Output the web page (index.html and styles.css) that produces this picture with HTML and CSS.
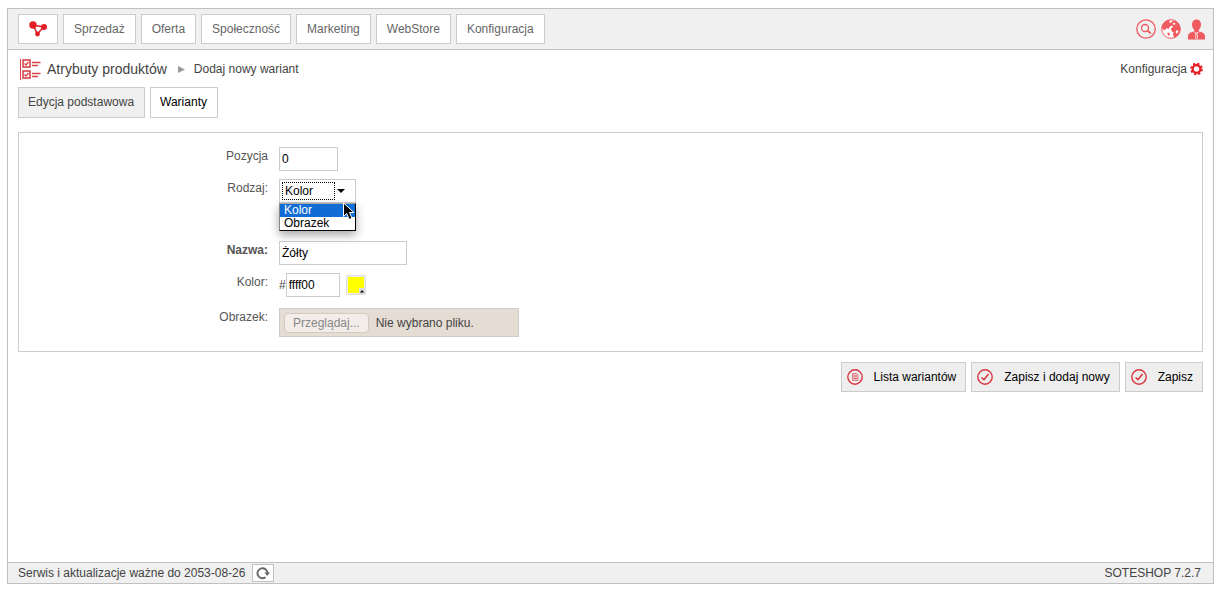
FILE: index.html
```
<!DOCTYPE html>
<html lang="pl">
<head>
  <meta charset="UTF-8" />
  <meta name="viewport" content="width=device-width, initial-scale=1.0"/>
  <title>Atrybuty produktów - Dodaj nowy wariant</title>
  <link rel="stylesheet" href="styles.css">
</head>
<body>
  <div class="frame">

    <!-- Menu główne -->
    <header class="topbar">
      <nav class="menu">
        <a class="menu-item menu-home" href="#" aria-label="Strona główna">
          <svg width="18" height="16" viewBox="0 0 18 16">
            <path d="M4 4L14.500 6L8.500 13Z" fill="none" stroke="#e31e24" stroke-width="1.500"/>
            <circle cx="4" cy="4" r="3.700" fill="#e31e24"/>
            <circle cx="15" cy="6" r="3" fill="#e31e24"/>
            <circle cx="8.500" cy="13" r="2.400" fill="#e31e24"/>
          </svg>
        </a>
        <a class="menu-item" href="#">Sprzedaż</a>
        <a class="menu-item" href="#">Oferta</a>
        <a class="menu-item" href="#">Społeczność</a>
        <a class="menu-item" href="#">Marketing</a>
        <a class="menu-item" href="#">WebStore</a>
        <a class="menu-item" href="#">Konfiguracja</a>
      </nav>
      <div class="tools">
        <a href="#" aria-label="Szukaj">
          <svg width="20" height="20" viewBox="0 0 20 20" fill="none" stroke="#ee5a5f">
            <circle cx="10" cy="10" r="9.200" stroke-width="1.300"/>
            <circle cx="9" cy="9" r="3.500" stroke-width="1.300"/>
            <path d="M11.500 11.500L14.800 14.600" stroke-width="1.800"/>
          </svg>
        </a>
        <a href="#" aria-label="Język">
          <svg width="20" height="20" viewBox="0 0 20 20">
            <circle cx="10" cy="10" r="9.300" fill="#fff" stroke="#ee5a5f"/>
            <path d="M0.700 9C1 4 5 0.700 9.500 0.700L8 3L9.500 4L11 2.500L14 1.500C17 3 19.300 6 19.300 10C19.300 14 17 17.500 13.500 18.700L12 16L12.500 13.500L10.500 12L10 9.500L12 8L11 6.500L9 7.500L7.500 10L5 9L4 11.500L2.500 10.500Z" fill="#ee5a5f"/>
            <path d="M11.500 4.500L13.500 3.500L14.500 5L13 6ZM14.500 13L16 11L17.500 12L16 15Z" fill="#fff"/>
            <path d="M6 14L8 13.500L9 15.500L7.500 17Z" fill="#ee5a5f"/>
          </svg>
        </a>
        <a href="#" aria-label="Konto">
          <svg width="20" height="21" viewBox="0 0 20 21">
            <path d="M10.500 0.500C13.500 0.500 15 2.500 15 5.500C15 8 14 9.500 12.800 10.700L12.800 12.500C16.500 13.500 19 14 19 17.500V20.500H2V17.500C2 14 4.500 13.500 8.200 12.500V10.700C7 9.500 6 8 6 5.500C6 2.500 7.500 0.500 10.500 0.500Z" fill="#ee5a5f"/>
            <path d="M8.200 13L10.500 14.200L12.800 13M10 14.200L9.500 18.500L10.500 20L11.500 18.500L11 14.200" fill="none" stroke="#fff" stroke-width="0.800"/>
          </svg>
        </a>
      </div>
    </header>

    <main class="content">
      <!-- Ścieżka -->
      <div class="heading">
        <svg class="heading-icon" width="22" height="22" viewBox="0 0 22 22" fill="none" stroke="#d8434a">
          <path d="M1.500 1V22" />
          <rect x="4" y="2" width="7" height="7" stroke-width="1.600"/>
          <rect x="4" y="13" width="7" height="7" stroke-width="1.600"/>
          <path d="M5.500 5.500L7 7L9.500 4M5.500 16.500L7 18L9.500 15" stroke-width="1.300"/>
          <path d="M13 4.500H21.500M13 7.500H19M13 15.500H21.500M13 18.500H19" stroke-width="1.300"/>
        </svg>
        <h1>Atrybuty produktów</h1>
        <svg class="arrow" width="7" height="7" viewBox="0 0 7 7"><path d="M0 0L7 3.500L0 7Z" fill="#999"/></svg>
        <span>Dodaj nowy wariant</span>
        <a class="config" href="#">Konfiguracja
          <svg width="13" height="14" viewBox="0 0 13 14" fill="none" stroke="#e31e24">
            <circle cx="6.500" cy="7" r="3.800" stroke-width="2.200"/>
            <circle cx="6.500" cy="7" r="5.300" stroke-width="2" stroke-dasharray="2.300 1.863"/>
          </svg>
        </a>
      </div>

      <nav class="tabs">
        <a class="tab" href="#">Edycja podstawowa</a>
        <a class="tab tab-active" href="#">Warianty</a>
      </nav>

      <form id="variant" class="panel">
        <div class="row">
          <label class="name" for="position">Pozycja</label>
          <input class="text text-small" id="position" type="text" value="0">
        </div>
        <div class="row row-type">
          <label class="name" for="type">Rodzaj:</label>
          <div class="select">
            <select id="type">
              <option selected>Kolor</option>
              <option>Obrazek</option>
            </select>
            <span class="focus"></span>
            <svg class="caret" width="8" height="4" viewBox="0 0 8 4"><path d="M0 0H8L4 4Z"/></svg>
            <ul class="options">
              <li class="selected">Kolor</li>
              <li>Obrazek</li>
            </ul>
            <svg class="cursor" width="14" height="19" viewBox="0 0 14 19">
              <path d="M1.500 1V14.500L4.700 11.500L7.300 17.500L10 16.300L7.500 10.500H12Z" fill="#000" stroke="#fff"/>
            </svg>
          </div>
        </div>
        <div class="row">
          <label class="name required" for="title">Nazwa:</label>
          <input class="text" id="title" type="text" value="Żółty">
        </div>
        <div class="row row-color">
          <label class="name" for="color">Kolor:</label>
          <div class="color">
            <span>#</span>
            <input class="text text-color" id="color" type="text" value="ffff00">
            <button class="swatch" type="button" aria-label="Wybierz kolor">
              <svg width="20" height="20" viewBox="0 0 20 20">
                <rect x="0.500" y="0.500" width="19" height="19" rx="1" fill="#eee" stroke="#ddd"/>
                <rect x="2" y="2" width="16" height="16" fill="#ff0"/>
                <path d="M13 13H19V19H13Z" fill="#ddd"/>
                <path d="M14 17.500L16 15L18 17.500Z"/>
              </svg>
            </button>
          </div>
        </div>
        <div class="row">
          <label class="name" for="image">Obrazek:</label>
          <div class="file">
            <span class="browse">Przeglądaj...</span>
            <span>Nie wybrano pliku.</span>
            <input id="image" type="file" disabled>
          </div>
        </div>
      </form>

      <div class="actions">
        <button class="action" type="button">
          <svg width="16" height="16" viewBox="0 0 16 16" fill="none" stroke="#d9363e">
            <circle cx="8" cy="8" r="7.200" stroke-width="1.400"/>
            <path d="M5.500 4.500H9.500L11 6V11.500H5.500Z" fill="#f6c9cb" stroke="#e0666b" stroke-width="0.800"/>
            <path d="M6.500 7H10M6.500 9.500H10" stroke-width="0.800"/>
          </svg>
          Lista wariantów
        </button>
        <button class="action" type="submit" form="variant">
          <svg width="16" height="16" viewBox="0 0 16 16" fill="none" stroke="#d9363e">
            <circle cx="8" cy="8" r="7.200" stroke-width="1.400"/>
            <path d="M4.500 8.500L7 10.700L11.500 5" stroke-width="1.600"/>
          </svg>
          Zapisz i dodaj nowy
        </button>
        <button class="action" type="submit" form="variant">
          <svg width="16" height="16" viewBox="0 0 16 16" fill="none" stroke="#d9363e">
            <circle cx="8" cy="8" r="7.200" stroke-width="1.400"/>
            <path d="M4.500 8.500L7 10.700L11.500 5" stroke-width="1.600"/>
          </svg>
          Zapisz
        </button>
      </div>
    </main>

    <footer class="footer">
      <span>Serwis i aktualizacje ważne do 2053-08-26</span>
      <button class="refresh" type="button" aria-label="Odśwież">
        <svg width="14" height="14" viewBox="0 0 14 14">
          <path d="M9.500 11.200A5 5 0 1 1 11.500 7" fill="none" stroke="#666" stroke-width="1.900"/>
          <path d="M8.500 6.500H14L11.200 10Z" fill="#666"/>
        </svg>
      </button>
      <span class="version">SOTESHOP 7.2.7</span>
    </footer>
  </div>
</body>
</html>
```

FILE: styles.css
```
:root {
  --border: #ccc;
  --frame: #c0c0c0;
  --bar: #f0f0f0;
  --text: #444;
}

* {
  box-sizing: border-box;
}

body {
  display: flex;
  min-height: 100vh;
  margin: 0;
  padding: 8px 6px 5px 7px;
  background: #fff;
  color: var(--text);
  font: 12px/18px "Liberation Sans", Arial, Helvetica, sans-serif;
}

a {
  color: inherit;
  text-decoration: none;
}

svg {
  display: block;
  flex: none;
}

input,
select,
button {
  margin: 0;
  font: inherit;
  color: #000;
}

.frame {
  display: flex;
  flex: 1;
  flex-direction: column;
  border: 1px solid var(--frame);
}

/* Górny pasek */
.topbar {
  display: flex;
  align-items: center;
  justify-content: space-between;
  padding: 5px 7px 5px 10px;
  border-bottom: 1px solid var(--frame);
  background: var(--bar);
}

.menu,
.tools,
.tabs {
  display: flex;
  gap: 5px;
}

.menu-item {
  display: flex;
  align-items: center;
  height: 30px;
  padding: 0 10px;
  border: 1px solid var(--border);
  background: #fff;
  color: #666;
}

.content {
  flex: 1;
  padding: 8px 10px;
}

.heading {
  display: flex;
  align-items: center;
  height: 22px;
  padding-left: 1px;
}

.heading h1 {
  margin: 0 11px 0 6px;
  font-size: 14px;
  font-weight: normal;
}

.arrow {
  margin-right: 9px;
}

.config {
  display: flex;
  align-items: center;
  gap: 3px;
  margin-left: auto;
}

/* Zakładki */
.tabs {
  margin: 7px 0 14px;
}

.tab {
  height: 31px;
  padding: 5px 10px 5px 9px;
  border: 1px solid var(--border);
  background: var(--bar);
}

.tab-active {
  background: #fff;
  color: #000;
}

/* Formularz */
.panel {
  display: flex;
  flex-direction: column;
  gap: 8px;
  padding: 14px 0;
  border: 1px solid var(--border);
}

.row {
  display: flex;
  align-items: flex-start;
  gap: 11px;
}

.row-type {
  min-height: 54px;
}

.row-color {
  min-height: 27px;
}

.name {
  width: 249px;
  color: #555;
  text-align: right;
}

.required {
  font-weight: bold;
}

.text {
  width: 128px;
  height: 24px;
  padding: 0 2px;
  border: 1px solid var(--border);
  background: #fff;
}

.text-small {
  width: 59px;
}

.text-color {
  width: 54px;
}

.select {
  position: relative;
  width: 77px;
}

.select select {
  display: block;
  width: 100%;
  height: 24px;
  padding: 0 5px;
  border: 1px solid var(--border);
  border-radius: 0;
  background: #fff;
  appearance: none;
}

.focus {
  position: absolute;
  top: 3px;
  left: 3px;
  width: 53px;
  height: 18px;
  border: 1px dotted #000;
  pointer-events: none;
}

.caret {
  position: absolute;
  top: 10px;
  right: 11px;
  pointer-events: none;
}

.options {
  position: absolute;
  top: 24px;
  left: 0;
  width: 100%;
  margin: 0;
  padding: 0;
  border: 1px solid #000;
  border-top-color: #aaa;
  border-left-color: #888;
  background: #fff;
  box-shadow: 0 4px 10px rgba(0, 0, 0, 0.35);
  color: #000;
  line-height: 13px;
  list-style: none;
}

.options li {
  padding: 0 4px;
}

.options .selected {
  background: #116cd6;
  color: #fff;
}

.cursor {
  position: absolute;
  top: 23px;
  left: 63px;
}

.color {
  display: flex;
  align-items: center;
}

.swatch {
  margin-left: 6px;
  padding: 0;
  border: 0;
  background: none;
}

.file {
  position: relative;
  display: flex;
  align-items: center;
  gap: 7px;
  width: 240px;
  height: 29px;
  padding: 0 4px;
  border: 1px solid var(--border);
  background: #e5dcd3;
}

.file input {
  position: absolute;
  inset: 0;
  width: 100%;
  opacity: 0;
}

.browse {
  padding: 0 8px;
  border: 1px solid #d3cac2;
  border-radius: 4px;
  background: #f2ede9;
  color: #888;
}

/* Przyciski akcji */
.actions {
  display: flex;
  justify-content: flex-end;
  gap: 5px;
  margin-top: 10px;
}

.action {
  display: flex;
  align-items: center;
  gap: 11px;
  height: 30px;
  padding: 0 9px 0 5px;
  border: 1px solid var(--border);
  background: #eee;
}

/* Stopka */
.footer {
  display: flex;
  align-items: center;
  gap: 7px;
  height: 21px;
  padding: 0 12px 0 10px;
  border-top: 1px solid var(--frame);
  background: var(--bar);
}

.refresh {
  padding: 1px 3px;
  border: 1px solid var(--frame);
  background: #fff;
}

.version {
  margin-left: auto;
}
```
